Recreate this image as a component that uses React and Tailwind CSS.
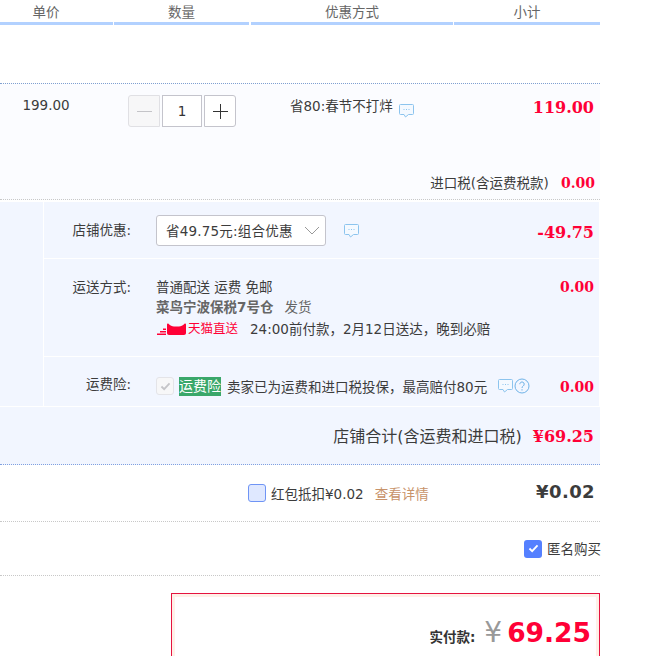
const sansClass = "font-['DejaVu_Sans','Noto_Sans_CJK_SC',sans-serif]";
const priceClass = "font-['DejaVu_Serif','Noto_Sans_CJK_SC',serif] font-bold text-[#ff0036]";

const columns = [
  { label: '单价', className: 'w-[113px] pr-[21px]' },
  { label: '数量', className: 'ml-px w-[135px]' },
  { label: '优惠方式', className: 'ml-[2px] w-[202px]' },
  { label: '小计', className: 'ml-px w-[146px]' },
];

function Bubble({ className }) {
  return (
    <svg viewBox="0 0 15 14" className={className} fill="none">
      <path d="M1.500 .5h12a1 1 0 0 1 1 1v8a1 1 0 0 1-1 1H9.500L6.500 13 5 10.500H1.500a1 1 0 0 1-1-1v-8a1 1 0 0 1 1-1z" fill="#f4f9ff" stroke="#8cc4ee" />
      <path d="M4.500 5.500h1M7 5.500h1M9.500 5.500h1" stroke="#8cc4ee" />
    </svg>
  );
}

function TmallMark() {
  return (
    <svg viewBox="0 0 30 12" className="h-[12px] w-[30px]">
      <path d="M0 10.500h9V12H0zM3 8h6v1.500H3zM6 5.500h3V7H6z" fill="#ff0036" />
      <path d="M11.500 .8c1.800 2 3.500 2.700 5.500 2.700h5c2 0 3.700-.7 5.500-2.700.7-.6 1.500-.3 1.500.7v8.500c0 1.200-.8 2-2 2H12c-1.200 0-2-.8-2-2V1.500c0-1 .8-1.300 1.500-.7z" fill="#ff0036" />
    </svg>
  );
}

function Header() {
  return (
    <div className="flex h-[25px] w-[600px]">
      {columns.map((col) => (
        <div
          key={col.label}
          className={`${col.className} h-[25px] border-b-[3px] border-[#b2d1ff] text-center text-[13.5px] leading-[24px] text-[#666] ${sansClass}`}
        >
          {col.label}
        </div>
      ))}
    </div>
  );
}

function Stepper() {
  return (
    <div className="flex gap-[2px]">
      <div className="flex h-[32px] w-[32px] items-center justify-center rounded-l-[3px] border border-[#e0e0e4] bg-[#f7f7f8]">
        <div className="h-px w-[15px] bg-[#c4c4c8]" />
      </div>
      <div className={`flex h-[32px] w-[40px] items-center justify-center border border-[#c4c4cc] bg-white text-[13.5px] text-[#333] ${sansClass}`}>
        1
      </div>
      <div className="relative flex h-[32px] w-[32px] items-center justify-center rounded-r-[3px] border border-[#c4c4cc] bg-white">
        <div className="h-px w-[15px] bg-[#333]" />
        <div className="absolute h-[15px] w-px bg-[#333]" />
      </div>
    </div>
  );
}

function ItemRow() {
  return (
    <div className={`mt-[58px] h-[117px] w-[600px] border-y border-dotted border-y-[#80a0d0] border-b-[#c8c8c8] bg-[#fbfcff] text-[13.5px] text-[#3c3c3c] ${sansClass}`}>
      <div className="flex h-[88px]">
        <div className="w-[92px] pt-[11px] text-center leading-[20px]">199.00</div>
        <div className="ml-[36px] pt-[11px]"><Stepper /></div>
        <div className="ml-[54px] flex pt-[12px] leading-[20px]">
          <span>省80:春节不打烊</span>
          <Bubble className="ml-[6px] mt-[8px] h-[14px] w-[15px]" />
        </div>
        <div className={`ml-auto pr-[6px] pt-[13px] text-[16px] leading-[22px] ${priceClass}`}>119.00</div>
      </div>
      <div className="flex items-center justify-end pr-[5px] pt-px">
        <span className="leading-[20px]">进口税(含运费税款)</span>
        <span className={`ml-[12px] text-[14px] leading-[20px] ${priceClass}`}>0.00</span>
      </div>
    </div>
  );
}

function LabelCell({ children, className }) {
  return <div className={`w-[87px] shrink-0 text-right leading-[20px] ${className}`}>{children}</div>;
}

function ShopRows() {
  return (
    <div className={`mt-[2px] flex w-[599px] border-b border-white bg-[#f2f6ff] text-[13.5px] text-[#3c3c3c] ${sansClass}`}>
      <div className="w-[44px] shrink-0 border-r border-white" />
      <div className="min-w-0 flex-1">
        <div className="flex h-[57px] border-b border-white pt-[13px]">
          <LabelCell className="pt-[5px]">店铺优惠:</LabelCell>
          <div className="ml-[25px] flex h-[31px] w-[170px] items-center justify-between rounded-[3px] border border-[#c4c4cc] bg-white pl-[9px] pr-[5px]">
            <span className="whitespace-nowrap leading-[20px] tracking-[0.2px]">省49.75元:组合优惠</span>
            <svg viewBox="0 0 16 9" className="h-[9px] w-[16px] shrink-0" fill="none">
              <path d="M1 1l7 7 7-7" stroke="#999" />
            </svg>
          </div>
          <Bubble className="ml-[18px] mt-[9px] h-[14px] w-[15px]" />
          <div className={`ml-auto pr-[5px] pt-[7px] text-[16px] leading-[22px] ${priceClass}`}>-49.75</div>
        </div>
        <div className="flex h-[98px] border-b border-white pt-[18px]">
          <LabelCell>运送方式:</LabelCell>
          <div className="ml-[25px] flex-1 leading-[20px]">
            <div>普通配送 运费 免邮</div>
            <div className="text-[#666]">
              <b>菜鸟宁波保税7号仓</b>
              <span className="ml-[11px]">发货</span>
            </div>
            <div className="mt-[2px] flex items-center">
              <span className="ml-px"><TmallMark /></span>
              <span className="ml-px text-[12.5px] text-[#ff0036]">天猫直送</span>
              <span className="ml-[12px] whitespace-nowrap">24:00前付款，2月12日送达，晚到必赔</span>
            </div>
          </div>
          <div className={`pr-[5px] text-[14px] leading-[20px] ${priceClass}`}>0.00</div>
        </div>
        <div className="flex h-[49px] pt-[18px]">
          <LabelCell className="-mt-px">运费险:</LabelCell>
          <div className="ml-[25px] flex h-[22px] items-center">
            <div className="flex h-[18px] w-[18px] items-center justify-center rounded-[3px] border border-[#e4e4e8] bg-[#f7f7f8]">
              <svg viewBox="0 0 12 10" className="h-[9px] w-[11px]" fill="none">
                <path d="M1.500 5l3 3 6-6.500" stroke="#c4c4c8" strokeWidth="2" />
              </svg>
            </div>
            <span className="ml-[5px] h-[19px] bg-[#3aa76a] text-[14px] leading-[19px] text-white">运费险</span>
            <span className="ml-[6px] mt-[3px] whitespace-nowrap">卖家已为运费和进口税投保，最高赔付80元</span>
            <Bubble className="ml-[11px] h-[14px] w-[15px]" />
            <svg viewBox="0 0 16 16" className="ml-px h-[16px] w-[16px] shrink-0" fill="none">
              <circle cx="8" cy="8" r="7" stroke="#6fb3e8" />
              <path d="M5.800 6.200a2.200 2.200 0 1 1 3.400 1.800c-.8.500-1.200 1-1.200 2M8 11.200v1.300" stroke="#6fb3e8" />
            </svg>
          </div>
          <div className={`ml-auto pr-[5px] pt-[2px] text-[14px] leading-[20px] ${priceClass}`}>0.00</div>
        </div>
      </div>
    </div>
  );
}

function ShopTotal() {
  return (
    <div className={`flex h-[58px] w-[600px] items-center justify-end border-b border-dotted border-[#80a0e0] bg-[#f2f6ff] pr-[6px] pt-[2px] ${sansClass}`}>
      <span className="text-[16px] text-[#3c3c3c]">店铺合计(含运费和进口税)</span>
      <span className={`ml-[11px] text-[16px] ${priceClass}`}>¥69.25</span>
    </div>
  );
}

function PacketRow() {
  return (
    <div className={`flex h-[57px] w-[600px] items-center border-b border-dotted border-[#c8c8c8] pl-[248px] pr-[5px] text-[13.5px] ${sansClass}`}>
      <div className="h-[18px] w-[18px] rounded-[3px] border border-[#6f94f5] bg-[#dfe8ff]" />
      <span className="ml-[5px] mt-[2px] text-[#3c3c3c]">红包抵扣¥0.02</span>
      <span className="ml-[11px] mt-[2px] text-[#c8936a]">查看详情</span>
      <span className="ml-auto -mt-[3px] text-[18px] font-bold tracking-[0.4px] text-[#3c3c3c]">¥0.02</span>
    </div>
  );
}

function AnonRow() {
  return (
    <div className={`flex h-[54px] w-[600px] items-center justify-end border-b border-dotted border-[#c8c8c8] text-[13.5px] text-[#3c3c3c] ${sansClass}`}>
      <div className="flex h-[18px] w-[18px] shrink-0 items-center justify-center rounded-[3px] bg-[#5580ff]">
        <svg viewBox="0 0 12 10" className="h-[9px] w-[11px]" fill="none">
          <path d="M1.500 5l3 3 6-6.500" stroke="#fff" strokeWidth="2" />
        </svg>
      </div>
      <span className="-mr-px ml-[5px] mt-px whitespace-nowrap">匿名购买</span>
    </div>
  );
}

function PayBox() {
  return (
    <div className={`ml-[171px] mt-[17px] h-[70px] w-[429px] border border-[#e5133f] ${sansClass}`}>
      <div className="h-full border-[3px] border-[#fff0e8] bg-white">
        <div className="flex items-baseline justify-end pr-[5px] pt-[20px]">
          <span className="text-[13.5px] font-bold text-[#333]">实付款:</span>
          <span className="ml-[9px] text-[28px] leading-[32px] text-[#999]">¥</span>
          <span className="ml-[5px] text-[26.5px] font-bold leading-[32px] text-[#ff0036]">69.25</span>
        </div>
      </div>
    </div>
  );
}

export default function App() {
  return (
    <div className="h-[656px] w-[645px] overflow-hidden bg-white">
      <Header />
      <ItemRow />
      <ShopRows />
      <ShopTotal />
      <PacketRow />
      <AnonRow />
      <PayBox />
    </div>
  );
}
